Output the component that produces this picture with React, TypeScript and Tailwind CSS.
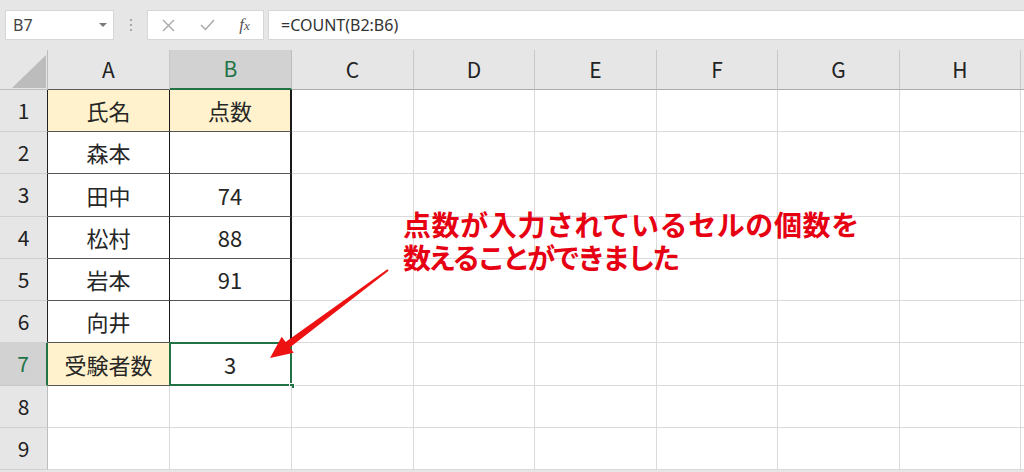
import React from "react";

const widths = [122, 122, 122, 121, 122, 121, 122, 121];
const letters = ["A", "B", "C", "D", "E", "F", "G", "H"];
const rowHeights = [42, 42, 43, 42, 42, 42, 43, 42, 42];

const names: Record<number, string> = {
  1: "氏名",
  2: "森本",
  3: "田中",
  4: "松村",
  5: "岩本",
  6: "向井",
  7: "受験者数",
};
const scores: Record<number, string> = {
  1: "点数",
  3: "74",
  4: "88",
  5: "91",
  7: "3",
};

const cellFont = { fontFamily: '"Noto Sans CJK JP", "Noto Sans", sans-serif' };

function FormulaBar() {
  return (
    <div className="flex h-[50px] items-start bg-[#e6e6e6] pt-[10px]">
      <div className="ml-[5px] flex h-[30px] w-[109px] items-center justify-between border border-[#d6d6d6] bg-white pl-[7px] pr-[6px]">
        <span className="text-[16px] text-[#444]" style={{ fontFamily: '"Noto Sans", sans-serif' }}>
          B7
        </span>
        <svg width="8" height="5" viewBox="0 0 8 5">
          <polygon points="0,0 8,0 4,4" fill="#7a7a7a" />
        </svg>
      </div>
      <div className="flex h-[30px] w-[33px] items-center justify-center">
        <svg width="4" height="14" viewBox="0 0 4 14">
          <circle cx="2" cy="2" r="1.1" fill="#9a9a9a" />
          <circle cx="2" cy="7" r="1.1" fill="#9a9a9a" />
          <circle cx="2" cy="12" r="1.1" fill="#9a9a9a" />
        </svg>
      </div>
      <div className="flex h-[30px] w-[117px] items-center border border-[#d6d6d6] bg-white">
        <div className="flex w-[40px] justify-center">
          <svg width="13" height="13" viewBox="0 0 13 13">
            <path d="M1 1 L12 12 M12 1 L1 12" stroke="#a8a8a8" strokeWidth="1.4" fill="none" />
          </svg>
        </div>
        <div className="flex w-[38px] justify-center">
          <svg width="15" height="12" viewBox="0 0 15 12">
            <path d="M1 6 L5.5 10.5 L14 1" stroke="#a8a8a8" strokeWidth="1.5" fill="none" />
          </svg>
        </div>
        <div className="flex w-[37px] justify-center">
          <span
            className="text-[17px] italic text-[#555]"
            style={{ fontFamily: '"Liberation Serif", serif' }}
          >
            f<span className="text-[13px]">x</span>
          </span>
        </div>
      </div>
      <div className="ml-[4px] flex h-[30px] flex-1 items-center border-y border-l border-[#d6d6d6] bg-white pl-[12px]">
        <span className="text-[16px] text-[#333]" style={{ fontFamily: '"Noto Sans", sans-serif' }}>
          =COUNT(B2:B6)
        </span>
      </div>
    </div>
  );
}

function HeaderRow() {
  return (
    <div className="flex h-[40px]">
      <div className="relative h-full w-[48px] border-b border-r border-[#bdbdbd] bg-[#e6e6e6]">
        <svg className="absolute left-0 top-0" width="48" height="40" viewBox="0 0 48 40">
          <polygon points="12,38 46,38 46,5" fill="#bcbcbc" />
        </svg>
      </div>
      {letters.map((l, i) => {
        const sel = l === "B";
        return (
          <div
            key={l}
            style={{ width: widths[i], ...cellFont }}
            className={
              "flex h-full items-center justify-center border-r text-[21px] " +
              (sel
                ? "border-b-2 border-r-[#bdbdbd] border-b-[#217346] bg-[#d2d2d2] text-[#217346]"
                : l === "A"
                ? "border-b border-r-[#c8c8c8] border-b-[#5a5a5a] bg-[#e6e6e6] text-[#222]"
                : "border-b border-r-[#c8c8c8] border-b-[#ababab] bg-[#e6e6e6] text-[#222]")
            }
          >
            {l}
          </div>
        );
      })}
      <div className="h-full flex-1 border-b border-[#ababab] bg-[#e6e6e6]" />
    </div>
  );
}

function Row({ r, h }: { r: number; h: number }) {
  const inTable = r <= 7;
  const sel = r === 7;
  const yellow = r === 1;
  return (
    <div className="flex" style={{ height: h }}>
      <div
        style={cellFont}
        className={
          "flex h-full w-[48px] items-center justify-center border-b text-[21px] " +
          (sel
            ? "border-r-2 border-b-[#c8c8c8] border-r-[#217346] bg-[#d2d2d2] text-[#217346]"
            : inTable
            ? "border-r border-b-[#d0d0d0] border-r-[#222] bg-[#e6e6e6] text-[#222]"
            : "border-r border-b-[#d0d0d0] border-r-[#bdbdbd] bg-[#e6e6e6] text-[#222]")
        }
      >
        {r}
      </div>
      {letters.map((l, i) => {
        if (l === "A") {
          return (
            <div
              key={l}
              style={{ width: widths[i], ...cellFont }}
              className={
                "flex h-full items-center justify-center text-[22px] text-[#262626] " +
                (inTable
                  ? "border-b border-r border-b-[#555] border-r-[#1a1a1a] " +
                    (yellow || sel ? "bg-[#fff2cc]" : "bg-white")
                  : "border-b border-r border-[#dadada] bg-white")
              }
            >
              {names[r] ?? ""}
            </div>
          );
        }
        if (l === "B") {
          return (
            <div
              key={l}
              style={{ width: widths[i], ...cellFont }}
              className={
                "relative flex h-full items-center justify-center text-[22px] text-[#262626] " +
                (inTable
                  ? "border-b border-r-2 border-b-[#555] border-r-[#1a1a1a] " +
                    (yellow ? "bg-[#fff2cc]" : "bg-white")
                  : "border-b border-r border-[#dadada] bg-white")
              }
            >
              {scores[r] ?? ""}
              {sel && (
                <>
                  <div className="pointer-events-none absolute -left-[1px] -top-[1px] bottom-[-1px] right-[-2px] border-2 border-[#217346]" />
                  <div className="absolute -bottom-[4px] -right-[5px] h-[6px] w-[6px] border border-white bg-[#217346]" />
                </>
              )}
            </div>
          );
        }
        return (
          <div
            key={l}
            style={{ width: widths[i] }}
            className="h-full border-b border-r border-[#dadada] bg-white"
          />
        );
      })}
      <div className="h-full flex-1 border-b border-[#dadada] bg-white" />
    </div>
  );
}

export default function App() {
  return (
    <div className="relative h-[472px] w-[1024px] overflow-hidden bg-[#e6e6e6]">
      <FormulaBar />
      <HeaderRow />
      {rowHeights.map((h, i) => (
        <Row key={i} r={i + 1} h={h} />
      ))}

      <svg className="pointer-events-none absolute left-0 top-0" width="1024" height="472" viewBox="0 0 1024 472">
        <polygon
          points="387.4,269.2 285.6,342 281.7,336.8 270,358 293.7,352.8 289.8,347.6 388.6,270.8"
          fill="#ee1111"
        />
      </svg>

      <div
        className="absolute left-[403px] top-[208px] flex flex-col text-[28px] font-bold text-[#e60012]"
        style={{ fontFamily: '"Noto Sans CJK JP", sans-serif' }}
      >
        <div className="h-[33px] leading-[33px] tracking-[0.6px]">点数が入力されているセルの個数を</div>
        <div className="h-[33px] leading-[33px] tracking-[-3px]">数えることができました</div>
      </div>
    </div>
  );
}
